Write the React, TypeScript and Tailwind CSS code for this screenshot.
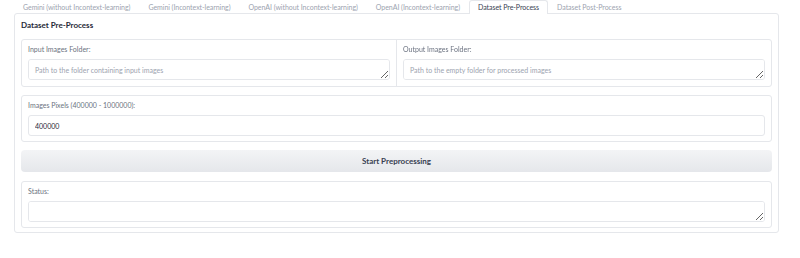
import React from 'react';

const tabs = [
  'Gemini (without Incontext-learning)',
  'Gemini (Incontext-learning)',
  'OpenAI (without Incontext-learning)',
  'OpenAI (Incontext-learning)',
  'Dataset Pre-Process',
  'Dataset Post-Process',
];

const Label = ({ children }: { children: React.ReactNode }) => (
  <p className="text-[7px] leading-[10px] text-[#6b7280]">{children}</p>
);

const Area = ({ placeholder }: { placeholder?: string }) => (
  <textarea
    rows={1}
    placeholder={placeholder}
    className="mt-[5px] block w-full h-[21px] resize-y rounded-[3px] border border-[#e5e7eb] bg-white px-[6px] py-[5px] text-[7px] leading-[10px] text-[#374151] placeholder:text-[#9ca3af] outline-none"
  />
);

const App = () => {
  const active = 'Dataset Pre-Process';

  return (
    <div className="w-[800px] h-[258px] bg-white" style={{ fontFamily: 'Lato, "Noto Sans", sans-serif' }}>
      {/* Tabs */}
      <div className="flex pl-[14px] h-[13px]">
        {tabs.map((t) => (
          <div
            key={t}
            className={`px-[8px] text-[7px] leading-[12px] tracking-[-0.05px] whitespace-nowrap ${
              t === active
                ? 'relative z-10 border border-b-0 border-[#e5e7eb] rounded-t-[3px] bg-white text-[#374151] h-[14px]'
                : 'border border-transparent text-[#9ca3af]'
            }`}
          >
            {t}
          </div>
        ))}
      </div>

      {/* Panel */}
      <div className="ml-[14px] w-[765px] border border-[#e5e7eb] rounded-[3px] px-[6px] pt-[4px] pb-[4px]">
        <h2 className="text-[8px] leading-[14px] font-bold text-[#1f2937]">Dataset Pre-Process</h2>

        <div className="mt-[7px] flex flex-col gap-[8px]">
          <div className="flex border border-[#e5e7eb] rounded-[3px] h-[48px]">
            <div className="flex-1 px-[6px] pt-[4px]">
              <Label>Input Images Folder:</Label>
              <Area placeholder="Path to the folder containing input images" />
            </div>
            <div className="flex-1 px-[6px] pt-[4px] border-l border-[#e5e7eb]">
              <Label>Output Images Folder:</Label>
              <Area placeholder="Path to the empty folder for processed images" />
            </div>
          </div>

          <div className="border border-[#e5e7eb] rounded-[3px] h-[47px] px-[6px] pt-[4px]">
            <Label>Images Pixels (400000 - 1000000):</Label>
            <input
              type="text"
              defaultValue="400000"
              className="mt-[5px] block w-full h-[21px] rounded-[3px] border border-[#e5e7eb] px-[6px] text-[7px] text-[#1f2937] outline-none"
            />
          </div>

          <button className="h-[22px] w-full rounded-[4px] bg-gradient-to-b from-[#f3f4f6] to-[#e5e7eb] text-[8px] font-bold text-[#374151]">
            Start Preprocessing
          </button>

          <div className="mt-px border border-[#e5e7eb] rounded-[3px] h-[47px] px-[6px] pt-[4px]">
            <Label>Status:</Label>
            <Area />
          </div>
        </div>
      </div>
    </div>
  );
};

export default App;
